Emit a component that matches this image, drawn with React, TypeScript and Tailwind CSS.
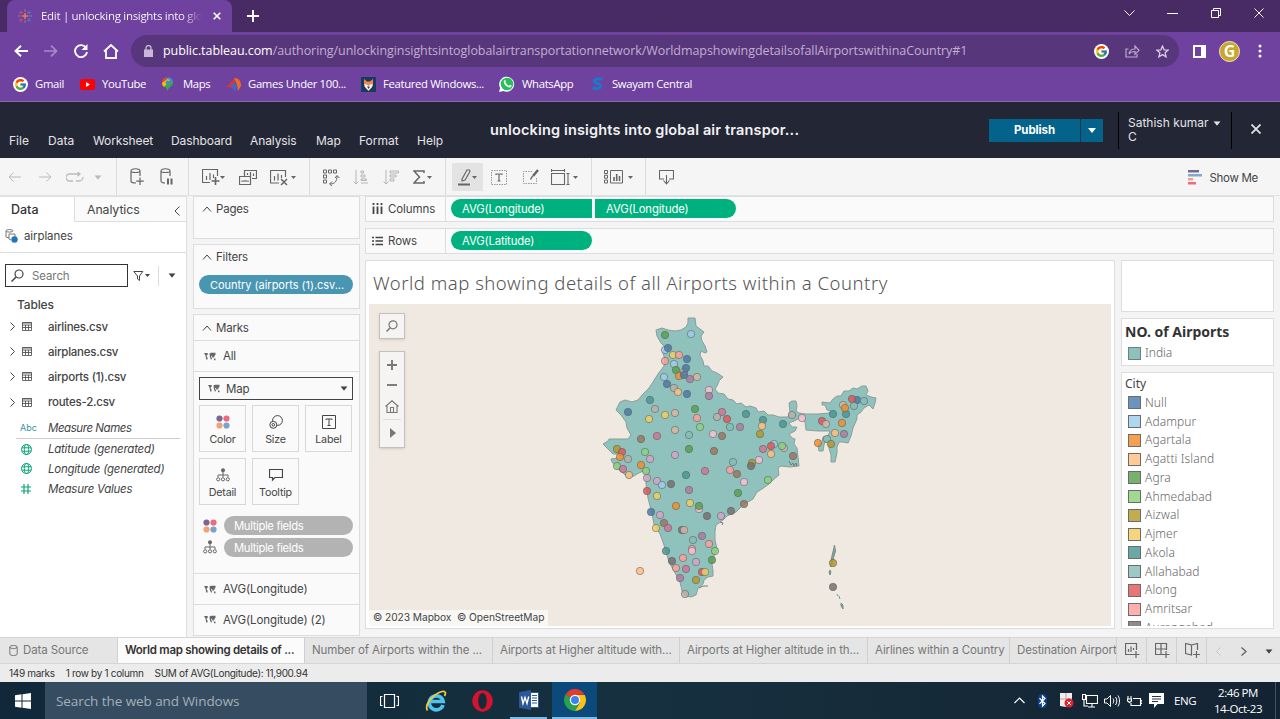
import React from "react";
import { FcGoogle } from "react-icons/fc";

type SvgProps = { w: number; h: number; className?: string; children: React.ReactNode };

function Svg({ w, h, className = "", children }: SvgProps) {
  return (
    <svg
      width={w}
      height={h}
      viewBox={`0 0 ${w} ${h}`}
      fill="none"
      stroke="currentColor"
      strokeWidth="1"
      className={"block shrink-0 " + className}
    >
      {children}
    </svg>
  );
}

const Caret = ({ className = "" }: { className?: string }) => (
  <Svg w={8} h={5} className={className}>
    <path d="M0 0h8L4 5z" fill="currentColor" stroke="none" />
  </Svg>
);

const SmallCaret = ({ className = "" }: { className?: string }) => (
  <Svg w={5} h={3} className={className}>
    <path d="M0 0h5L2.500 3z" fill="currentColor" stroke="none" />
  </Svg>
);

const Chevron = ({ className = "" }: { className?: string }) => (
  <Svg w={10} h={6} className={className}>
    <path d="M1 5.500 5 1l4 4.500" strokeWidth="1" />
  </Svg>
);

const MapMark = () => (
  <Svg w={12} h={9} className="text-[#666]">
    <path d="M0 1h3.500l.5 1.200-1.200 1v1.800l1 .8-.8 2.500L2 6.500 1.500 3.500zM5.500 1.500 7 .8h4.500v2l-1 1 .5 1-1-.3L9 6.500 8 4 7 3.800l1 3.200-1 .8-1.200-3zM10 6.500h1.500v1.800H10z" fill="currentColor" stroke="none" />
  </Svg>
);

const ColorDots = () => (
  <Svg w={14} h={14}>
    <g stroke="none">
      <circle cx="3.500" cy="3.500" r="3.100" fill="#7b6694" />
      <circle cx="10.500" cy="3.500" r="3.100" fill="#ee6a7c" />
      <circle cx="3.500" cy="10.500" r="3.100" fill="#f0a278" />
      <circle cx="10.500" cy="10.500" r="3.100" fill="#7ba0cc" />
    </g>
  </Svg>
);

const DetailIcon = () => (
  <Svg w={14} h={14} className="text-[#666]">
    <circle cx="7" cy="2.300" r="2" fill="currentColor" stroke="none" />
    <path d="M7 4v5M2 9V7h10v2" />
    <circle cx="2.200" cy="11.300" r="1.600" />
    <circle cx="7" cy="11.300" r="1.600" />
    <circle cx="11.800" cy="11.300" r="1.600" />
  </Svg>
);

function TitleStrip() {
  return (
    <div className="flex h-8 bg-[#482a65] pl-[7px] text-white">
      <div className="flex h-8 w-[225px] items-center rounded-t-lg bg-[#6f42a0] pl-[11px]">
        <Svg w={14} h={14}>
          <path d="M7 4v6M4 7h6" stroke="#ee7b45" strokeWidth="1.500" />
          <path d="M3 1.500v4M1 3.500h4M3 9v4M1 11h4" stroke="#c25168" />
          <path d="M11 1.500v4M9 3.500h4M11 9v4M9 11h4" stroke="#5f76b5" />
          <path d="M7 0v3M7 11v3M0 7h3M11 7h3" stroke="#6c87b8" />
        </Svg>
        <div className="ml-[9px] w-[161px] whitespace-nowrap bg-gradient-to-r from-white from-88% to-transparent bg-clip-text text-[11.500px] tracking-[-0.300px] text-transparent">
          Edit | unlocking insights into glo
        </div>
        <Svg w={8} h={8} className="ml-[11px]">
          <path d="m.7.7 6.600 6.600M7.300.7.700 7.300" strokeWidth="1.600" />
        </Svg>
      </div>
      <Svg w={12} h={12} className="ml-[15px] mt-[10px]">
        <path d="M6 0v12M0 6h12" strokeWidth="1.900" />
      </Svg>
      <div className="flex-1" />
      <Svg w={11} h={7} className="mr-[32px] mt-[10px]">
        <path d="m.5.5 5 5 5-5" />
      </Svg>
      <Svg w={11} h={3} className="mr-[33px] mt-[12px]">
        <path d="M0 1.500h11" />
      </Svg>
      <Svg w={10} h={10} className="mr-[33px] mt-[8px]">
        <path d="M.5 2.500h7v7h-7zM2.500 2V.500h7v7H8" />
      </Svg>
      <Svg w={10} h={10} className="mr-[16px] mt-[8px]">
        <path d="m.5.5 9 9M9.500.5l-9 9" />
      </Svg>
    </div>
  );
}

function AddressBar() {
  return (
    <div className="flex h-[39px] items-center pb-px text-white">
      <Svg w={14} h={12} className="ml-[14px]">
        <path d="M14 6H1.500M7 .7 1.500 6 7 11.300" strokeWidth="1.900" />
      </Svg>
      <Svg w={14} h={12} className="ml-[16px] text-[#a98bca]">
        <path d="M0 6h12.500M7 .7 12.500 6 7 11.300" strokeWidth="1.700" />
      </Svg>
      <Svg w={14} h={14} className="ml-[16px]">
        <path d="M12.200 4A6 6 0 1 0 13 8" strokeWidth="1.900" />
        <path d="M13.500 0v6h-6z" fill="currentColor" stroke="none" />
      </Svg>
      <Svg w={16} h={15} className="ml-[15px]">
        <path d="M1 7.500 8 1l7 6.500M3 6.500V14h10V6.500" strokeWidth="1.800" />
      </Svg>
      <div className="ml-[12px] flex h-8 w-[1048px] items-center rounded-full bg-[#58367c] pl-[13px]">
        <Svg w={9} h={12} className="text-[#c7b8d8]">
          <path d="M0 4.500h9V12H0z" fill="currentColor" stroke="none" />
          <path d="M2 5V3a2.500 2.500 0 0 1 5 0v2" strokeWidth="1.300" />
        </Svg>
        <div className="ml-[10px] w-[931px] whitespace-nowrap text-[12.500px] tracking-[-0.062px] text-[#c0aed3]">
          <span className="text-white">public.tableau.com</span>
          /authoring/unlockinginsightsintoglobalairtransportationnetwork/WorldmapshowingdetailsofallAirportswithinaCountry#1
        </div>
        <span className="flex size-[15px] items-center justify-center rounded-full bg-white">
          <FcGoogle size={13} />
        </span>
        <Svg w={15} h={14} className="ml-[16px] text-[#bca9cf]">
          <path d="M3.500 5H1v8h11v-3M4 10c.5-3.500 3-5 6-5V2l4 4.300-4 4V7.500c-2.500 0-4.500.5-6 2.500z" strokeWidth="1.200" />
        </Svg>
        <Svg w={13} h={13} className="ml-[16px] text-[#dacde8]">
          <path d="m6.500 1 1.600 3.800 4.200.3-3.200 2.700 1 4-3.600-2.200-3.600 2.200 1-4L.7 5.100l4.200-.3z" strokeWidth="1.300" />
        </Svg>
      </div>
      <Svg w={13} h={13} className="ml-[14px]">
        <path d="M0 0h13v13H0zM2 2v9h6V2z" fill="currentColor" fillRule="evenodd" stroke="none" />
      </Svg>
      <span className="ml-[13px] flex size-[21px] items-center justify-center rounded-full border border-[#f3ecc4] bg-[#caa52c] text-[16px] font-bold text-white">
        G
      </span>
      <Svg w={4} h={14} className="ml-[18px]">
        <g fill="currentColor" stroke="none">
          <circle cx="2" cy="2" r="1.500" />
          <circle cx="2" cy="7" r="1.500" />
          <circle cx="2" cy="12" r="1.500" />
        </g>
      </Svg>
    </div>
  );
}

function Bookmarks() {
  const item = "flex shrink-0 items-center whitespace-nowrap";
  return (
    <div className="flex h-[30px] items-center pl-[13px] pb-[4px] text-[11.300px] tracking-[-0.330px] text-white">
      <div className={item + " w-[67px]"}>
        <span className="mr-[7px] flex size-[15px] items-center justify-center rounded-full bg-white">
          <FcGoogle size={13} />
        </span>
        Gmail
      </div>
      <div className={item + " w-[82px]"}>
        <Svg w={15} h={11} className="mr-[7px]">
          <rect width="15" height="11" rx="2.500" fill="#f00" stroke="none" />
          <path d="m6 3 4 2.500L6 8z" fill="#fff" stroke="none" />
        </Svg>
        YouTube
      </div>
      <div className={item + " w-[64px]"}>
        <Svg w={11} h={14} className="mr-[10px]">
          <g stroke="none">
            <path d="M5.500 14C4.500 10 0 8.500 0 5l3-4 5 .500L3 8z" fill="#34a853" />
            <path d="M0 5.500A5.500 5.500 0 0 1 5.500 0L2 6z" fill="#ea4335" />
            <path d="M5.500 0A5.500 5.500 0 0 1 11 5.500L6 7z" fill="#4285f4" />
            <path d="M11 5.500C11 9 6.500 10 5.500 14L3 8.500 8 3z" fill="#34a853" />
            <path d="M0 6c0 2 1 3 2.200 4L8 3 5.500 2z" fill="#fbbc04" />
            <circle cx="5.500" cy="5.300" r="1.900" fill="#4285f4" />
          </g>
        </Svg>
        Maps
      </div>
      <div className={item + " w-[134px]"}>
        <Svg w={15} h={15} className="mr-[7px]">
          <g stroke="none">
            <path d="M0 10.500 9 1 8 13c-2-3-5-3.500-8-2.500z" fill="#e3342f" />
            <path d="M8 1c5 0 7 3 7 8l-3 5-1-6z" fill="#f26a21" />
            <path d="M4 9c2-2 5-3 7-2l-1 6-2 1c-.5-3-2-4.500-4-5z" fill="#2d6fd2" />
          </g>
        </Svg>
        Games Under 100...
      </div>
      <div className={item + " w-[139px]"}>
        <Svg w={15} h={15} className="mr-[7px] ml-[1px]">
          <rect width="15" height="15" fill="#173a63" stroke="none" />
          <path d="m3 2 3 2.500h3L12 2v7l-4.500 5L3 9z" fill="#f0894a" stroke="none" />
          <path d="m3.500 7 2 .5L7.500 9l2-1.500 2-.5-1 3.500-3 3-3-3z" fill="#fff" stroke="none" />
          <path d="M6 9.500h3l-1.500 2.500z" fill="#173a63" stroke="none" />
        </Svg>
        Featured Windows...
      </div>
      <div className={item + " w-[92px]"}>
        <Svg w={16} h={16} className="mr-[7px]">
          <path d="m0 16 1.200-4A7.500 7.500 0 1 1 4.500 15z" fill="#fff" stroke="none" />
          <circle cx="8" cy="8" r="6.300" fill="#25c05a" stroke="none" />
          <path d="M5.500 5c0 3 3 6 6 5.500M5.500 5l1-.5M11.500 10.500v-1.500" stroke="#fff" strokeWidth="1.800" />
        </Svg>
        WhatsApp
      </div>
      <div className={item}>
        <Svg w={13} h={14} className="mr-[8px]">
          <path d="M11.500 2.500C8 1 2 2 3.500 5c1 1.500 6 1 6 4 0 2.500-4 3-8 2" stroke="#1e78c8" strokeWidth="3" />
        </Svg>
        Swayam Central
      </div>
    </div>
  );
}

function HeaderBar() {
  return (
    <div className="flex h-[57px] border-t border-[#8a6aae] bg-[#232635] font-['Inter',sans-serif] text-[12px] text-[#e3e3e6]">
      <div className="flex w-[490px] pt-[31px] pl-[9px] leading-[16px]">
        <span className="w-[39px]">File</span>
        <span className="w-[45px]">Data</span>
        <span className="w-[78px] tracking-[-0.100px]">Worksheet</span>
        <span className="w-[79px] tracking-[-0.100px]">Dashboard</span>
        <span className="w-[66px] tracking-[-0.100px]">Analysis</span>
        <span className="w-[43px]">Map</span>
        <span className="w-[58px]">Format</span>
        <span>Help</span>
      </div>
      <div className="w-[499px] pt-[18px] text-[14.500px] leading-[20px] font-semibold tracking-[0.150px] text-[#f1f1f3]">
        unlocking insights into global air transpor...
      </div>
      <div className="mt-[17px] flex h-[23px] bg-[#04638a] text-white">
        <span className="w-[92px] border-r border-[#1d3346] text-center text-[11.500px] leading-[23px] font-bold tracking-[-0.100px]">Publish</span>
        <span className="flex w-[22px] items-center justify-center"><Caret /></span>
      </div>
      <div className="mt-[10px] ml-[15px] flex h-[37px] w-[114px] border-x border-black pt-[4px] pl-[9px] leading-[14px]">
        <div className="w-[87px]">Sathish kumar<br />C</div>
        <Caret className="mt-[5px] -ml-[2px] scale-90" />
      </div>
      <Svg w={10} h={10} className="mt-[22px] ml-[19px]">
        <path d="m.5.5 9 9M9.500.5l-9 9" strokeWidth="1.800" />
      </Svg>
    </div>
  );
}

function Toolbar() {
  const group = "flex h-full shrink-0 items-center border-r border-[#dcdcdc] pt-px";
  return (
    <div className="flex h-[38px] border-b border-[#e2e2e2] bg-[#f5f5f5] font-['Inter',sans-serif] text-[#666]">
      <div className={group + " w-[117px] pl-[8px] text-[#bbb]"}>
        <Svg w={13} h={10} className="mr-[18px]"><path d="M13 5H1M5.500.5 1 5l4.500 4.500" /></Svg>
        <Svg w={13} h={10} className="mr-[14px]"><path d="M0 5h12M7.500.5 12 5 7.500 9.500" /></Svg>
        <Svg w={18} h={11} className="mr-[10px]"><path d="M7 9H3.500a3.500 3.500 0 0 1 0-7H14M11.500-.2 14 2l-2.500 2.300M10 9h3a4 4 0 0 0 4-4" strokeWidth="1.300" /></Svg>
        <Caret className="scale-90" />
      </div>
      <div className={group + " w-[72px] pl-[13px]"}>
        <Svg w={14} h={18} className="mr-[16px]">
          <path d="M1 3v10c0 1 2 2 5 2M1 3c0-3 9-3 9 0v5M1 3c0 2 9 2 9 0M10 9.500v7.500M6.200 13.200h7.600" strokeWidth="1.200" />
        </Svg>
        <Svg w={14} h={18}>
          <path d="M1 3v10c0 1 2 2 4 2M1 3c0-3 9-3 9 0v5M1 3c0 2 9 2 9 0" strokeWidth="1.200" />
          <path d="M8 10.500v6M11.500 10.500v6" strokeWidth="2" />
        </Svg>
      </div>
      <div className={group + " w-[121px] pl-[13px]"}>
        <Svg w={18} h={18}><path d="M8 14.500H.5V1.500h15V8M4.500 8v4M8 5v7M11.500 6.500V10" strokeWidth="1.200" /><path d="M13.500 9v8M9.500 13h8" strokeWidth="1.600" /></Svg>
        <SmallCaret />
        <Svg w={18} h={17} className="ml-[14px]"><path d="M5.500 7V1.500h12v8H13M.5 7.500h11v8H.5zM8.500 6V4M11.500 7V3M14.500 7V4.500M3 13v-1.500M5 13v-2M7 13v-2M9 13v-1.500" strokeWidth="1.200" /></Svg>
        <Svg w={18} h={17} className="ml-[13px]"><path d="M9 14H.5V1.500h15V8M4.500 7v4.500M8 4.500v7M11.500 6v3" strokeWidth="1.200" /><path d="m11 10 6 6M17 10l-6 6" strokeWidth="1.500" /></Svg>
        <SmallCaret className="ml-[3px]" />
      </div>
      <div className={group + " w-[136px] pl-[13px]"}>
        <Svg w={18} h={17}>
          <path d="M.5 1h3v3h-3zM5.500 1h3v3h-3zM10.500 1h3v3h-3zM.5 6h3v3h-3zM.5 11h3v3h-3z" />
          <path d="M7 15c5 0 7-3 7-8M12 9l2-2.500L16.500 9M9 12.500 6.500 15 9 17" />
        </Svg>
        <Svg w={16} h={15} className="ml-[12px] text-[#b5b5b5]"><path d="M3 0v14M.5 11.500 3 14l2.500-2.500M8 1h2.500v2H8zM8 5h4v2H8zM8 9h5.500v1.500H8zM8 13h7" /></Svg>
        <Svg w={16} h={15} className="ml-[14px] text-[#b5b5b5]"><path d="M3 0v14M.5 11.500 3 14l2.500-2.500M7 1h8.500v2H7zM7 5h6v2H7zM7 9h4v2H7z" /></Svg>
        <Svg w={12} h={14} className="ml-[14px]"><path d="M11 3V1H1l5.500 6L1 13h10v-2" strokeWidth="1.500" /></Svg>
        <SmallCaret className="ml-[2px]" />
      </div>
      <div className={group + " w-[146px] pl-[6px]"}>
        <div className="flex h-[28px] w-[31px] items-center bg-[#e3e3e3] pl-[6px]">
          <Svg w={13} h={17}><path d="m4 10 5-9h2.500l.5 1.500-5 8.500-3 1z" strokeWidth="1.200" /><path d="M0 15.500h12" strokeWidth="2" /></Svg>
          <SmallCaret className="ml-[1px]" />
        </div>
        <Svg w={16} h={15} className="ml-[8px]"><path d="M.5.500h15v14H.5z" strokeDasharray="1.500 1" stroke="#999" /><path d="M5 5V4h6v1M8 4v7M6.500 11h3" strokeWidth="1.200" /></Svg>
        <Svg w={16} h={16} className="ml-[16px]"><path d="M9 2.500H.5v12h13V8" strokeDasharray="1.500 1" stroke="#999" /><path d="m15 1-5 6" strokeWidth="2.500" /><path d="m9.500 7-2 3.500" strokeWidth="1.500" /></Svg>
        <Svg w={19} h={16} className="ml-[12px]"><path d="M.5 4.500h13v11H.5zM.5 0v3M13.500 0v3M.5 1.500h13M15.500 4.500h3M17 4.500v11M15.500 15.500h3" strokeWidth="1.100" /></Svg>
        <SmallCaret className="ml-[3px]" />
      </div>
      <div className={group + " w-[54px] pl-[12px]"}>
        <Svg w={19} h={14}><path d="M.5.5h3v3h-3zM.5 5.200h3v3h-3zM.5 10h3v3h-3zM6.500.5h12v12.500h-12z" /><path d="M10 7v4M12.700 4v7M15.500 6v5" strokeWidth="1.600" /></Svg>
        <SmallCaret className="ml-[5px]" />
      </div>
      <Svg w={15} h={15} className="mt-[12px] ml-[13px]"><path d="M5 9H.5V.500h14V9H10M7.500 5v9M4.500 10.500l3 3.500 3-3.500" strokeWidth="1.100" /></Svg>
      <div className="flex-1" />
      <Svg w={14} h={15} className="mt-[12px]">
        <g stroke="none">
          <path d="M0 0h11v2.500H0z" fill="#7b6694" />
          <path d="M0 4h14v2.500H0z" fill="#82a8cf" />
          <path d="M0 8h5v2.500H0z" fill="#f0a278" />
          <path d="M0 12h8v2.500H0z" fill="#ee6a7c" />
        </g>
      </Svg>
      <span className="mr-[22px] ml-[7px] text-[11.500px] leading-[40px] tracking-[-0.300px] text-[#444]">Show Me</span>
    </div>
  );
}

const tables = ["airlines.csv", "airplanes.csv", "airports (1).csv", "routes-2.csv"];

const Globe = () => (
  <Svg w={11} h={11} className="text-[#0aa57a]">
    <circle cx="5.500" cy="5.500" r="5" />
    <ellipse cx="5.500" cy="5.500" rx="2.200" ry="5" />
    <path d="M1 3.800h9M1 7.200h9" />
  </Svg>
);

function DataPane() {
  return (
    <div className="w-[187px] border-r border-[#ddd] bg-white text-[#444]">
      <div className="flex h-[26px] border-t border-[#e0e0e0]">
        <div className="w-[75px] border-r border-[#ddd] pt-[4px] pl-[11px] text-[12.500px] font-medium text-[#333]">Data</div>
        <div className="flex flex-1 justify-between border-b border-[#ddd] bg-[#fafafa] pt-[4px] pr-[6px] pl-[12px] text-[12.300px] tracking-[-0.080px]">
          Analytics
          <Svg w={6} h={10} className="mt-[5px]"><path d="M5.500.5 1 5l4.500 4.500" /></Svg>
        </div>
      </div>
      <div className="flex h-[31px] items-center border-b border-[#ddd] pb-[2px] pl-[5px] text-[11.500px] tracking-[-0.100px]">
        <Svg w={13} h={14} className="mr-[6px]">
          <path d="M1 2v6l3 1M1 2c0-2 7-2 7 0M1 2c1 1.500 5 1.500 7 0M4 5h6v3M4 5v5l2 1" stroke="#777" />
          <circle cx="9.500" cy="10.500" r="3.200" fill="#1f77b4" stroke="none" />
        </Svg>
        airplanes
      </div>
      <div className="mt-[11px] flex h-[23px] items-center pl-[5px]">
        <div className="flex h-[23px] w-[123px] items-center border border-[#333] pl-[5px] text-[11.500px] tracking-[-0.100px] text-[#777]">
          <Svg w={13} h={13} className="mr-[8px] text-[#444]"><circle cx="8" cy="5" r="4" strokeWidth="1.200" /><path d="M5 8 .5 12.500" strokeWidth="1.500" /></Svg>
          Search
        </div>
        <Svg w={11} h={10} className="ml-[5px]"><path d="M.8.500h9L6.500 5v4.500l-2-1.500V5z" /></Svg>
        <SmallCaret className="ml-[1px]" />
        <div className="ml-[8px] h-[20px] w-px bg-[#ddd]" />
        <Caret className="ml-[9px] scale-90" />
      </div>
      <div className="mt-[6px] pl-[17px] text-[12px] leading-[23px] font-medium tracking-[-0.150px]">Tables</div>
      {tables.map((t) => (
        <div key={t} className="flex h-[25.200px] items-center pb-[4px] pl-[10px] text-[11.500px] font-medium tracking-[-0.240px]">
          <Svg w={5} h={9}><path d="M.5.5 4.500 4.500l-4 4" /></Svg>
          <Svg w={10} h={9} className="ml-[7px] mr-[16px]"><path d="M.5.5h9v8h-9zM.5 1h9M.5 3h9M.5 5.500h9M3.500 3v5M6.500 3v5" strokeWidth=".8" /></Svg>
          {t}
        </div>
      ))}
      <div className="mr-[6px] ml-[16px] flex h-[22px] items-center border-b border-[#ccc] pt-px text-[11.500px] tracking-[-0.450px] italic">
        <span className="w-[32px] pl-[4px] text-[9px] tracking-normal text-[#3b8ea5] not-italic">Abc</span>Measure Names
      </div>
      {["Latitude (generated)", "Longitude (generated)", "Measure Values"].map((t, i) => (
        <div key={t} className="flex h-[19.800px] items-center pt-px pl-[21px] text-[11.500px] tracking-[-0.240px] italic">
          <span className="w-[27px]">
            {i < 2 ? <Globe /> : <Svg w={10} h={10} className="text-[#0aa57a]"><path d="M3 0v10M7 0v10M0 3h10M0 7h10" strokeWidth="1.200" /></Svg>}
          </span>
          {t}
        </div>
      ))}
    </div>
  );
}

const card = "border border-[#ddd] bg-[#fafafa]";

function Shelves() {
  const btn = "flex h-[47px] w-[47px] flex-col items-center border border-[#d8d8d8] pt-[9px]";
  const caption = "mt-[4px] text-[10.700px] leading-[14px]";
  const pill = "h-[19px] w-[129px] rounded-full bg-[#b3b3b3] pl-[10px] text-[11.300px] leading-[20px] tracking-[-0.360px] text-white";
  return (
    <div className="ml-[6px] w-[167px] text-[11.500px] tracking-[-0.200px] text-[#444]">
      <div className={card + " flex h-[43px] pt-[3px] pl-[8px]"}>
        <Chevron className="mt-[6px] mr-[4px]" />Pages
      </div>
      <div className={card + " mt-[5px] h-[65px] pt-[3px] pl-[5px]"}>
        <div className="flex pl-[3px]"><Chevron className="mt-[6px] mr-[4px]" />Filters</div>
        <div className="mt-[9px] h-[19px] w-[154px] rounded-full bg-[#4996b2] pl-[11px] text-[11px] leading-[20px] tracking-[-0.030px] whitespace-nowrap text-white">
          Country (airports (1).csv...
        </div>
      </div>
      <div className={card + " mt-[5px] h-[322px]"}>
        <div className="flex h-[26px] border-b border-[#ddd] pt-[4px] pl-[8px]"><Chevron className="mt-[6px] mr-[4px]" />Marks</div>
        <div className="flex h-[31px] items-center border-b border-[#ddd] pl-[10px]"><MapMark /><span className="ml-[7px]">All</span></div>
        <div className="mt-[5px] ml-[5px] flex h-[23px] w-[154px] items-center border border-[#444] pl-[8px]">
          <MapMark /><span className="ml-[6px] flex-1">Map</span><Caret className="mr-[4px] scale-90" />
        </div>
        <div className="mt-[5px] ml-[5px] grid grid-cols-[47px_47px_47px] gap-x-[6px] gap-y-[6px]">
          <div className={btn}><ColorDots /><span className={caption}>Color</span></div>
          <div className={btn}>
            <Svg w={14} h={14}><circle cx="8.500" cy="5.500" r="4.900" /><circle cx="4.300" cy="9.800" r="3.500" fill="#fafafa" /><circle cx="4.300" cy="9.800" r="1.300" /></Svg>
            <span className={caption}>Size</span>
          </div>
          <div className={btn}>
            <Svg w={14} h={14}><path d="M.5.5h13v13H.5zM4 5V4h6v1M7 4v6.500M5.500 10.500h3" /></Svg>
            <span className={caption}>Label</span>
          </div>
          <div className={btn}><DetailIcon /><span className={caption}>Detail</span></div>
          <div className={btn}>
            <Svg w={14} h={14}><path d="M.5 1.500h13v8H6L3.500 12V9.500h-3z" strokeWidth="1.200" /></Svg>
            <span className={caption}>Tooltip</span>
          </div>
        </div>
        <div className="mt-[10px] flex h-[21.500px] items-center pl-[9px]"><ColorDots /><div className={pill + " ml-[7px]"}>Multiple fields</div></div>
        <div className="flex h-[21.500px] items-center pl-[9px]"><DetailIcon /><div className={pill + " ml-[7px]"}>Multiple fields</div></div>
        <div className="mt-[15px] flex h-[31px] items-center border-t border-[#ddd] pl-[10px]"><MapMark /><span className="ml-[7px] tracking-[-0.100px]">AVG(Longitude)</span></div>
        <div className="flex h-[30px] items-center border-t border-[#ddd] pl-[10px]"><MapMark /><span className="ml-[7px] tracking-[-0.100px]">AVG(Longitude) (2)</span></div>
      </div>
    </div>
  );
}

const palette: Record<string, string> = {
  n: "#4e79a7", b: "#a0cbe8", o: "#f28e2b", O: "#ffbe7d", g: "#59a14f", G: "#8cd17d",
  l: "#b6992d", y: "#f1ce63", t: "#499894", T: "#86bcb6", r: "#e15759", R: "#ff9d9a",
  k: "#79706e", K: "#bab0ac", m: "#d37295", M: "#fabfd2", p: "#b07aa1", P: "#d4a6c8",
  w: "#9d7660", W: "#d7b5a6",
};

const airports =
  "665,335,g 691,334,b 665,350,b 668,348,n 673,355,y 679,355,R 665,361,R 687,359,n 674,364,b 676,370,g 684,372,W 686,368,n 679,376,o 684,375,n 690,379,p 697,377,W 664,377,b 667,384,n 674,388,K 678,392,O 687,394,n 709,390,M 709,396,p 650,400,t 655,409,K 628,412,n 649,419,y 665,415,y 675,413,W 695,409,g 697,418,R 722,412,m 717,417,K 727,419,r 746,414,t 700,427,G 730,427,T 740,427,p 675,430,W 689,435,T 713,434,M 722,436,w 657,436,m 641,439,w 645,452,G 689,449,g 714,451,w 675,455,P 617,449,l 622,452,r 620,457,o 628,459,K 650,459,P 617,466,G 623,469,m 629,475,O 641,465,o 646,471,G 647,478,P 657,481,P 662,485,b 671,484,k 686,475,t 705,471,m 730,470,R 737,474,w 733,462,T 744,482,M 738,493,g 647,491,r 657,496,y 689,490,p 676,506,o 690,503,y 699,509,M 699,506,g 707,516,k 721,516,P 731,511,k 744,504,w 651,512,n 660,515,P 664,523,w 668,528,m 656,528,y 682,530,k 684,530,W 693,540,T 702,536,p 709,544,R 715,551,G 692,549,R 692,551,M 666,551,t 672,561,k 683,558,R 712,560,g 696,562,P 676,568,R 686,569,m 702,572,r 705,572,y 680,578,p 696,580,l 685,594,K 640,571,O 763,420,t 762,426,O 783,424,t 760,434,l 792,415,K 802,418,M 833,414,t 846,414,t 843,405,W 845,408,o 857,400,n 852,399,r 854,406,T 864,401,T 822,421,r 826,424,W 842,423,o 835,433,O 844,434,p 818,443,o 827,439,T 831,444,l 774,444,b 771,446,r 763,449,m 771,454,O 784,448,W 782,446,G 793,456,w 752,463,l 751,466,k 759,460,M 768,480,G 833,563,l 833,587,k"
    .split(" ")
    .map((s) => s.split(","));

const outline =
  "M688 318 L695 318 696 326 700 329 704 332 701 336 702 341 705 346 707 352 705 353 701 351 700 355 703 361 704 366 708 366 712 371 717 373 723 377 719 381 717 386 715 389 718 393 724 394 728 399 733 400 737 404 741 403 746 407 750 406 756 408 758 412 764 411 768 415 773 415 779 417 788 417 790 412 789 403 792 401 796 401 797 406 796 411 799 413 805 414 818 414 829 413 831 411 827 410 825 405 822 405 822 402 830 403 833 399 837 396 841 396 844 391 849 391 853 388 857 389 862 386 866 386 868 391 866 395 871 397 876 398 875 403 873 409 869 405 864 408 861 412 857 415 857 419 853 428 851 436 848 443 843 442 839 442 837 447 837 453 835 462 831 462 831 455 829 448 829 442 825 442 824 445 823 451 819 451 818 445 822 442 823 437 828 436 830 431 818 431 806 430 805 422 802 417 794 421 789 423 792 427 797 427 795 431 789 434 792 438 795 439 794 444 797 448 798 457 799 466 790 467 781 466 778 468 779 475 773 480 769 484 762 489 757 492 753 499 743 505 736 512 727 516 723 520 719 523 716 525 715 531 715 540 717 549 714 556 712 564 713 571 713 576 708 577 704 580 703 584 698 588 696 595 691 597 686 596 682 591 680 582 674 571 669 562 664 545 660 534 654 524 652 514 648 498 646 484 646 475 643 471 637 474 634 476 628 478 623 473 617 468 612 462 611 459 617 458 621 459 619 454 613 454 607 448 603 444 608 441 609 439 621 439 628 439 631 435 627 428 626 422 621 415 616 410 620 402 625 400 632 402 638 400 643 394 649 388 653 382 658 374 664 366 665 360 663 353 665 347 661 343 657 336 656 330 662 328 668 330 675 331 681 330 686 327 688 323z";

function IndiaMap() {
  return (
    <svg width="742" height="322" viewBox="369 304 742 322" className="block">
      <path d={outline} fill="#8fc2bc" stroke="#8c9d99" strokeWidth="1" strokeLinejoin="round" />
      <path d="M789 461l2 4 2-2 1 3 2-3 1 3M720 522l3 1-1 2M699 588l4-2 5 0" stroke="#777" fill="none" />
      <path d="M834.500 545l1 6-2 7-1 6-2 3 1-9zM830 570l1 2-1 3-1-3zM837 594l1 2M839 596l1 3M841 603l2 2v4l-2-3z" fill="#7fa39e" stroke="#7d8f8c" strokeWidth="1" />
      {airports.map(([x, y, c], i) => (
        <circle key={i} cx={x} cy={y} r="3.700" fill={palette[c]} fillOpacity=".85" stroke="#55605e" strokeOpacity=".55" strokeWidth="1" />
      ))}
    </svg>
  );
}

function ShelfRow({ name, rows, children }: { name: string; rows?: boolean; children: React.ReactNode }) {
  return (
    <div className={card + " flex h-[26px] items-center pb-px text-[11.500px] tracking-[-0.100px] text-[#444]"}>
      <div className="flex h-[24px] w-[80px] items-center border-r border-[#ddd] pl-[6px]">
        {rows ? (
          <Svg w={11} h={10} className="mr-[5px]"><path d="M0 1.500h2M3.500 1.500H11M0 5h2M3.500 5H11M0 8.500h2M3.500 8.500H11" strokeWidth="1.600" /></Svg>
        ) : (
          <Svg w={11} h={11} className="mr-[5px]"><path d="M1.500 0v2M1.500 3.500V11M5.500 0v2M5.500 3.500V11M9.500 0v2M9.500 3.500V11" strokeWidth="1.800" /></Svg>
        )}
        {name}
      </div>
      <div className="flex gap-[3px] pl-[5px] text-[11.300px] leading-[20px] tracking-[-0.130px] text-white">{children}</div>
    </div>
  );
}

function MapControls() {
  const cell = "flex items-center justify-center";
  return (
    <div className="absolute top-[9px] left-[10px] text-[#777]">
      <div className="flex size-[26px] items-center justify-center border border-[#c4c0bc] bg-[#f5f4f2] shadow-sm">
        <Svg w={12} h={12}><circle cx="7" cy="4.800" r="4" strokeWidth="1.200" /><path d="M4.200 7.800.5 11.500" strokeWidth="1.500" /></Svg>
      </div>
      <div className="mt-[12px] h-[97px] w-[26px] border border-[#c4c0bc] bg-[#f5f4f2] pt-[2px] shadow-sm">
        <div className={cell + " h-[21px]"}><Svg w={10} h={10}><path d="M5 0v10M0 5h10" strokeWidth="1.900" /></Svg></div>
        <div className={cell + " h-[20px]"}><Svg w={10} h={10}><path d="M0 5h10" strokeWidth="1.900" /></Svg></div>
        <div className={cell + " h-[22px]"}><Svg w={14} h={13}><path d="M.5 6.500 7 .8l6.500 5.700M2 5.500v7h10v-7M5.500 12.500V7.500h3v5" strokeWidth="1.100" /></Svg></div>
        <div className={cell + " mx-[3px] mt-[2px] h-[27px] border-t border-[#e0ddd9]"}><Svg w={7} h={10}><path d="M1 0l6 5-6 5z" fill="currentColor" stroke="none" /></Svg></div>
      </div>
    </div>
  );
}

const cities: [string, string][] = [
  ["Null", "bg-[#6b93bd]"], ["Adampur", "bg-[#afd6f0]"], ["Agartala", "bg-[#f5a04f]"],
  ["Agatti Island", "bg-[#ffca97]"], ["Agra", "bg-[#76b26c]"], ["Ahmedabad", "bg-[#a0da92]"],
  ["Aizwal", "bg-[#c3ab50]"], ["Ajmer", "bg-[#f5d67d]"], ["Akola", "bg-[#69aaa6]"],
  ["Allahabad", "bg-[#9ec8c3]"], ["Along", "bg-[#e87578]"], ["Amritsar", "bg-[#ffafad]"],
  ["Aurangabad", "bg-[#918a88]"],
];

function Legend() {
  return (
    <div className="ml-[6px] flex w-[153px] flex-col gap-[6px] font-['Noto_Sans',sans-serif] text-[#666]">
      <div className="h-[52px] border border-[#ddd] bg-white" />
      <div className="h-[48px] border border-[#ddd] bg-white pl-[3px]">
        <div className="pt-[3px] text-[14px] leading-[19px] font-bold text-[#333]">NO. of Airports</div>
        <div className="mt-[3px] ml-[3px] flex items-center text-[12px] leading-[18px] font-light">
          <span className="mr-[4px] size-[13px] border border-[#707e7c] bg-[#8cc2bb]" />India
        </div>
      </div>
      <div className="h-[257px] overflow-hidden border border-[#ddd] bg-white pl-[3px]">
        <div className="h-[20px] pt-[2px] text-[12px] leading-[17px] text-[#444]">City</div>
        <div className="h-[233px] overflow-hidden">
          {cities.map(([name, color]) => (
            <div key={name} className="ml-[3px] flex h-[18.750px] items-center pt-px text-[12px] font-light tracking-[0.100px]">
              <span className={"mr-[4px] size-[13px] border border-[#6b6b6b] " + color} />
              {name}
            </div>
          ))}
        </div>
      </div>
    </div>
  );
}

function Workspace() {
  return (
    <div className="flex h-[441px] bg-[#f4f4f4] font-['Inter',sans-serif]">
      <DataPane />
      <Shelves />
      <div className="ml-[5px] w-[909px]">
        <ShelfRow name="Columns">
          <div className="h-[19px] w-[141px] rounded-l-full bg-[#00b180] pl-[11px]">AVG(Longitude)</div>
          <div className="h-[19px] w-[141px] rounded-r-full bg-[#00b180] pl-[11px]">AVG(Longitude)</div>
        </ShelfRow>
        <div className="h-[6px]" />
        <ShelfRow name="Rows" rows>
          <div className="h-[19px] w-[141px] rounded-full bg-[#00b180] pl-[11px]">AVG(Latitude)</div>
        </ShelfRow>
        <div className="mt-[6px] flex">
          <div className="h-[369px] w-[750px] border border-[#ddd] bg-white px-[3px]">
            <div className="h-[43px] pl-[4px] font-['Noto_Sans',sans-serif] text-[18.500px] leading-[44px] font-light tracking-[0.510px] whitespace-nowrap text-[#555]">
              World map showing details of all Airports within a Country
            </div>
            <div className="relative h-[322px] w-[742px] bg-[#f0e9e2]">
              <IndiaMap />
              <MapControls />
              <div className="absolute bottom-0 left-0 h-[16px] bg-[#f9f7f4] px-[4px] text-[10.200px] leading-[15px] tracking-[-0.050px] whitespace-nowrap text-[#444]">
                © 2023 Mapbox&nbsp; © OpenStreetMap
              </div>
            </div>
          </div>
          <Legend />
        </div>
      </div>
    </div>
  );
}

function SheetTabs() {
  const tab = "h-full shrink-0 overflow-hidden whitespace-nowrap border-r border-[#cfcfcf] pl-[7px]";
  const add = "flex h-full w-[30px] shrink-0 items-center justify-center border-r border-[#cfcfcf] pl-[2px] text-[#666]";
  return (
    <div className="flex h-[27px] border-y border-[#d5d5d5] bg-[#e5e5e5] font-['Inter',sans-serif] text-[11.500px] leading-[25px] tracking-[-0.120px] text-[#777]">
      <div className="flex w-[118px] items-center border-r border-[#d0d0d0] pl-[9px]">
        <Svg w={9} h={11} className="mr-[5px]"><path d="M.8 2v7c0 2 7.400 2 7.400 0V2M.8 2c0-2 7.400-2 7.400 0s-7.400 2-7.400 0" /></Svg>
        Data Source
      </div>
      <div className={tab + " w-[187px] bg-[#fbfbfb] font-semibold tracking-[-0.280px]! text-[#333]"}>World map showing details of ...</div>
      <div className={tab + " w-[188px]"}>Number of Airports within the ...</div>
      <div className={tab + " w-[187px]"}>Airports at Higher altitude with...</div>
      <div className={tab + " w-[188px]"}>Airports at Higher altitude in th...</div>
      <div className={tab + " w-[142px]"}>Airlines within a Country</div>
      <div className={tab + " w-[107px]"}>Destination Airport</div>
      <div className={add}><Svg w={15} h={15}><path d="M8 11.500H.5V.5h11V7M3.500 6v3M6 3.500V9M8.500 5v2M11 8v7M7.500 11.500h7" strokeWidth="1.200" /></Svg></div>
      <div className={add}><Svg w={15} h={15}><path d="M8 11.500H.5V.5h11V7M6 .5v11M.5 6h11M11 8v7M7.500 11.500h7" strokeWidth="1.200" /></Svg></div>
      <div className={add}><Svg w={15} h={15}><path d="M6.500 2v10L.5 10.500V.5zM6.500 2l6-1.500V7M11.500 8v7M8 11.500h7" strokeWidth="1.200" /></Svg></div>
      <div className="flex flex-1 items-center pt-[2px] pl-[9px]">
        <Svg w={5} h={9} className="text-[#c5c5c5]"><path d="M4.500.5.5 4.500l4 4" /></Svg>
        <Svg w={6} h={9} className="ml-[20px] text-[#666]"><path d="M.5.5 5 4.500l-4.500 4" strokeWidth="1.400" /></Svg>
        <Caret className="ml-[18px] scale-90 text-[#444]" />
      </div>
    </div>
  );
}

function Taskbar() {
  return (
    <div className="flex h-[37px] items-center bg-gradient-to-r from-[#10283a] via-[#16303f] to-[#142333] text-white">
      <div className="flex w-[45px] justify-center">
        <Svg w={16} h={16}><path d="M0 2.300 6.500 1.300v6.200H0zM7.500 1.200 16 0v7.500H7.500zM0 8.500h6.500v6.200L0 13.700zM7.500 8.500H16V16l-8.500-1.200z" fill="#fff" stroke="none" /></Svg>
      </div>
      <div className="h-full w-[322px] bg-[#364c60] pl-[11px] text-[13.500px] leading-[38px] tracking-[-0.070px] text-[#a3b0bb]">Search the web and Windows</div>
      <Svg w={19} h={14} className="ml-[13px]"><path d="M4.500.5h10v13h-10zM2.500 2.500h-2v9h2M16.500 2.500h2v9h-2" strokeWidth="1.200" /></Svg>
      <Svg w={22} h={22} className="ml-[26px]">
        <path d="M18 15A7 7 0 1 1 18.200 11.500H6" stroke="#4fc3f0" strokeWidth="3.600" />
        <path d="M2.500 20.500C-1 15 8 4 17 1.500c4-1 4 2 2.500 4.500" stroke="#f2c83a" strokeWidth="1.800" />
      </Svg>
      <Svg w={21} h={22} className="ml-[25px]">
        <ellipse cx="10.500" cy="11" rx="10.300" ry="10.700" fill="#d3142c" stroke="none" />
        <ellipse cx="10.500" cy="11" rx="4.300" ry="8" fill="#152a3a" stroke="none" />
      </Svg>
      <div className="ml-[17px] flex h-full w-[37px] items-center justify-center border-b-2 border-[#7fb9e6]">
        <Svg w={20} h={20}>
          <path d="M10 2.500h9.500v15H10z" fill="#fff" stroke="#2b579a" />
          <path d="M13 5.500h5M13 8h5M13 10.500h5M13 13h5" stroke="#2b579a" />
          <path d="M0 2.200 12 0v20L0 17.800z" fill="#2b579a" stroke="none" />
          <path d="m2.500 6.500 1.500 7 2-6 2 6 1.700-7" stroke="#fff" strokeWidth="1.400" />
        </Svg>
      </div>
      <div className="ml-[5px] flex h-full w-[45px] items-center justify-center border-b-2 border-[#7fb9e6] bg-[#0d4a7c]">
        <Svg w={22} h={22}>
          <g stroke="none">
            <path d="M11 11 1.500 5.500A11 11 0 0 1 20.500 5.500L11 6z" fill="#e33b2e" />
            <path d="M11 11 1.500 5.500A11 11 0 0 0 11 22l4.500-8z" fill="#2ca14b" />
            <path d="M11 6h9.800A11 11 0 0 1 11 22l5-8.500z" fill="#fbc116" />
            <circle cx="11" cy="11" r="5.200" fill="#fff" />
            <circle cx="11" cy="11" r="4" fill="#3f82ee" />
          </g>
        </Svg>
      </div>
      <div className="flex-1" />
      <Svg w={11} h={7}><path d="m.5 6 5-5 5 5" strokeWidth="1.200" /></Svg>
      <Svg w={9} h={14} className="ml-[13px]"><rect width="9" height="14" rx="4" fill="#0a3f86" stroke="none" /><path d="m1.500 4.300 5.500 5.200L4.500 12V2L7 4.500l-5.500 5.200" strokeWidth="1.200" /></Svg>
      <Svg w={14} h={15} className="ml-[13px]">
        <path d="M0 0h12v13l-6 1-6-1z" fill="#eee" stroke="none" />
        <path d="M6 0v6H0M6 6h6" stroke="#c99" />
        <circle cx="9" cy="10" r="4.500" fill="#e0202a" stroke="none" />
        <path d="m7 8 4 4M11 8l-4 4" stroke="#fff" />
      </Svg>
      <Svg w={16} h={14} className="ml-[8px]"><path d="M4.500 1.500h11v8h-11zM10 9.500v3.500M6 13h7M.5.500h3v5h-3zM2 5.500V12h4" strokeWidth="1.100" /></Svg>
      <Svg w={16} h={14} className="ml-[6px]"><path d="M.5 5H3l3.500-3.500v11L3 9H.5zM9 4.500c1 1.500 1 3.500 0 5M11.500 3c1.800 2.500 1.800 5.500 0 8M14 1.500c2 3.500 2 7.500 0 11" /></Svg>
      <Svg w={15} h={12} className="ml-[7px]"><path d="M6 3.500h7.500v7H4V8M13.500 5.500h1.500v3h-1.500M1 1v3M4 1v3M.5 4h4v2l-2 1.500L.5 6z" strokeWidth="1.100" /></Svg>
      <Svg w={15} h={15} className="ml-[7px]"><path d="M0 0h15v11H8.500L5 15v-4H0z" fill="#fff" stroke="none" /><path d="M3 3.500h9M3 6h9M3 8.500h6" stroke="#233648" /></Svg>
      <span className="ml-[10px] w-[32px] text-[11.500px] tracking-[-0.400px]">ENG</span>
      <div className="mr-[5px] w-[64px] text-center text-[11.500px] leading-[16px] tracking-[-0.450px] whitespace-nowrap">
        2:46 PM<br />14-Oct-23
      </div>
      <div className="h-full w-px bg-[#45525e]" />
      <div className="w-[4px]" />
    </div>
  );
}

export default function App() {
  return (
    <div className="h-[719px] w-[1280px] overflow-hidden bg-[#6f42a0] font-['Open_Sans',sans-serif] leading-[18px]">
      <TitleStrip />
      <AddressBar />
      <Bookmarks />
      <HeaderBar />
      <Toolbar />
      <Workspace />
      <SheetTabs />
      <div className="flex h-[18px] gap-[11px] bg-[#ececec] pl-[9px] font-['Inter',sans-serif] text-[10px] leading-[18px] tracking-[-0.320px] text-[#333]">
        <span>149 marks</span>
        <span>1 row by 1 column</span>
        <span>SUM of AVG(Longitude): 11,900.94</span>
      </div>
      <Taskbar />
    </div>
  );
}
